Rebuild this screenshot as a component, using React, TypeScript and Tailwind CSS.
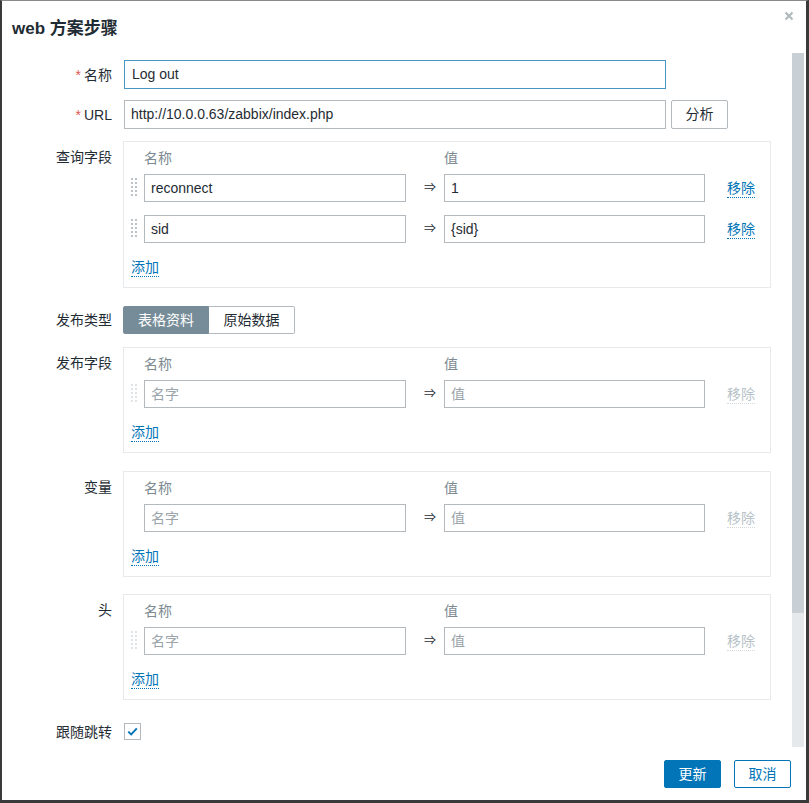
import React from "react";

const FONT = { fontFamily: '"Liberation Sans", "Noto Sans CJK SC", sans-serif' };

function Handle({ light }: { light?: boolean }) {
  const c = light ? "#dfe4e7" : "#b9c3c9";
  const dots = [];
  for (let r = 0; r < 5; r++) {
    for (let k = 0; k < 2; k++) {
      dots.push(<rect key={`${r}-${k}`} x={k * 4} y={r * 4} width="2" height="2" fill={c} />);
    }
  }
  return (
    <svg width="6" height="20" viewBox="0 0 6 20">
      {dots}
    </svg>
  );
}

function Field({ value, placeholder, w }: { value?: string; placeholder?: string; w: string }) {
  return (
    <div className={`${w} h-[28px] border border-[#b4b9bd] bg-white flex items-center px-[6px] text-[14px]`}>
      {value ? <span className="text-[#1f2c33]">{value}</span> : <span className="text-[#9aa4aa]">{placeholder}</span>}
    </div>
  );
}

type Row = { name?: string; value?: string };

function PairBox({
  rows,
  handle,
  lightHandle,
  disabledRemove,
}: {
  rows: Row[];
  handle: boolean;
  lightHandle?: boolean;
  disabledRemove?: boolean;
}) {
  return (
    <div className="w-[648px] border border-[#e6eaec] bg-white pt-[6px] pb-[8px]">
      <div className="h-[20px] flex items-center pl-[20px] text-[14px] text-[#7d8a91]">
        <div className="w-[300px]">名称</div>
        <div>值</div>
      </div>
      <div className="mt-[6px] flex flex-col gap-[13px]">
        {rows.map((r, i) => (
          <div key={i} className="flex items-center h-[28px] pl-[7px]">
            <div className="w-[13px] flex items-center">{handle && <Handle light={lightHandle} />}</div>
            <Field w="w-[262px]" value={r.name} placeholder="名字" />
            <div className="w-[38px] flex justify-end pr-[8px] text-[12px] text-[#1f2c33]">⇒</div>
            <Field w="w-[261px]" value={r.value} placeholder="值" />
            <span
              className={`ml-[22px] text-[14px] leading-[18px] border-b border-dotted ${
                disabledRemove ? "text-[#b7c2c8] border-[#d3dadd]" : "text-[#0275b8] border-[#0275b8]"
              }`}
            >
              移除
            </span>
          </div>
        ))}
      </div>
      <div className="mt-[12px] h-[24px] flex items-center pl-[7px]">
        <span className="text-[14px] leading-[18px] text-[#0275b8] border-b border-dotted border-[#0275b8]">添加</span>
      </div>
    </div>
  );
}

function Label({ children, req, top }: { children: React.ReactNode; req?: boolean; top?: boolean }) {
  return (
    <div
      className={`w-[110px] shrink-0 flex justify-end text-[14px] leading-[20px] text-[#1f2c33] ${
        top ? "pt-[6px] items-start" : "items-center"
      }`}
    >
      {req && <span className="text-[#e45959] mr-[3px]">*</span>}
      {children}
    </div>
  );
}

export default function App() {
  return (
    <div style={FONT} className="w-[809px] h-[803px] bg-white flex flex-col border-t border-t-[#8a8a8a] border-l-2 border-l-[#3a3a3a] border-r-[3px] border-r-[#3a3a3a] border-b-[3px] border-b-[#3a3a3a]">
      {/* header */}
      <div className="h-[52px] shrink-0 flex justify-between items-start">
        <div className="pt-[18px] pl-[10px] text-[17px] leading-[20px] font-bold text-[#1f2c33]">web 方案步骤</div>
        <div className="pt-[10px] pr-[12px]">
          <svg width="10" height="10" viewBox="0 0 10 10">
            <path d="M1.5 1.5 L8.5 8.5 M8.5 1.5 L1.5 8.5" stroke="#aeb7bc" strokeWidth="2" />
          </svg>
        </div>
      </div>

      {/* body */}
      <div className="h-[694px] shrink-0 flex">
        <div className="w-[790px] flex flex-col pt-[7px]">
          <div className="flex gap-[12px] h-[29px]">
            <Label req>名称</Label>
            <div className="w-[542px] h-[29px] border border-[#4796c4] flex items-center px-[7px] text-[14px] text-[#1f2c33]">Log out</div>
          </div>
          <div className="flex gap-[12px] h-[29px] mt-[11px]">
            <Label req>URL</Label>
            <div className="w-[542px] h-[29px] border border-[#b4b9bd] flex items-center px-[6px] text-[14px] text-[#1f2c33]">
              http://10.0.0.63/zabbix/index.php
            </div>
            <div className="ml-[-7px] w-[57px] h-[29px] border border-[#b4b9bd] rounded-[2px] flex items-center justify-center text-[14px] text-[#1f2c33]">
              分析
            </div>
          </div>

          <div className="flex gap-[11px] mt-[12px]">
            <Label top>查询字段</Label>
            <PairBox rows={[{ name: "reconnect", value: "1" }, { name: "sid", value: "{sid}" }]} handle />
          </div>

          <div className="flex gap-[11px] mt-[18px] h-[28px]">
            <Label>发布类型</Label>
            <div className="flex h-[28px] text-[14px]">
              <div className="w-[86px] bg-[#768d99] text-white flex items-center justify-center rounded-l-[2px] border border-[#768d99]">表格资料</div>
              <div className="w-[86px] bg-white text-[#1f2c33] flex items-center justify-center rounded-r-[2px] border border-l-0 border-[#b4b9bd]">原始数据</div>
            </div>
          </div>

          <div className="flex gap-[11px] mt-[13px]">
            <Label top>发布字段</Label>
            <PairBox rows={[{}]} handle lightHandle disabledRemove />
          </div>

          <div className="flex gap-[11px] mt-[18px]">
            <Label top>变量</Label>
            <PairBox rows={[{}]} handle={false} disabledRemove />
          </div>

          <div className="flex gap-[11px] mt-[17px]">
            <Label top>头</Label>
            <PairBox rows={[{}]} handle lightHandle disabledRemove />
          </div>

          <div className="flex gap-[12px] mt-[23px] h-[17px]">
            <Label>跟随跳转</Label>
            <div className="w-[17px] h-[17px] border border-[#b4b9bd] bg-white flex items-center justify-center">
              <svg width="11" height="9" viewBox="0 0 11 9">
                <path d="M1.2 4.6 L4.2 7.4 L9.8 1.4" stroke="#0275b8" strokeWidth="1.9" fill="none" />
              </svg>
            </div>
          </div>
        </div>
        {/* scrollbar */}
        <div className="w-[12px] flex flex-col">
          <div className="h-[560px] bg-[#c9d0d5]" />
          <div className="h-[134px] bg-[#e6e9eb]" />
        </div>
      </div>

      {/* footer */}
      <div className="flex-1 flex justify-end items-start pt-[13px] pr-[15px] gap-[13px]">
        <div className="w-[57px] h-[28px] bg-[#0275b8] border border-[#0275b8] rounded-[2px] text-white text-[14px] flex items-center justify-center">更新</div>
        <div className="w-[57px] h-[28px] bg-white border border-[#0275b8] rounded-[2px] text-[#0275b8] text-[14px] flex items-center justify-center">取消</div>
      </div>
    </div>
  );
}
